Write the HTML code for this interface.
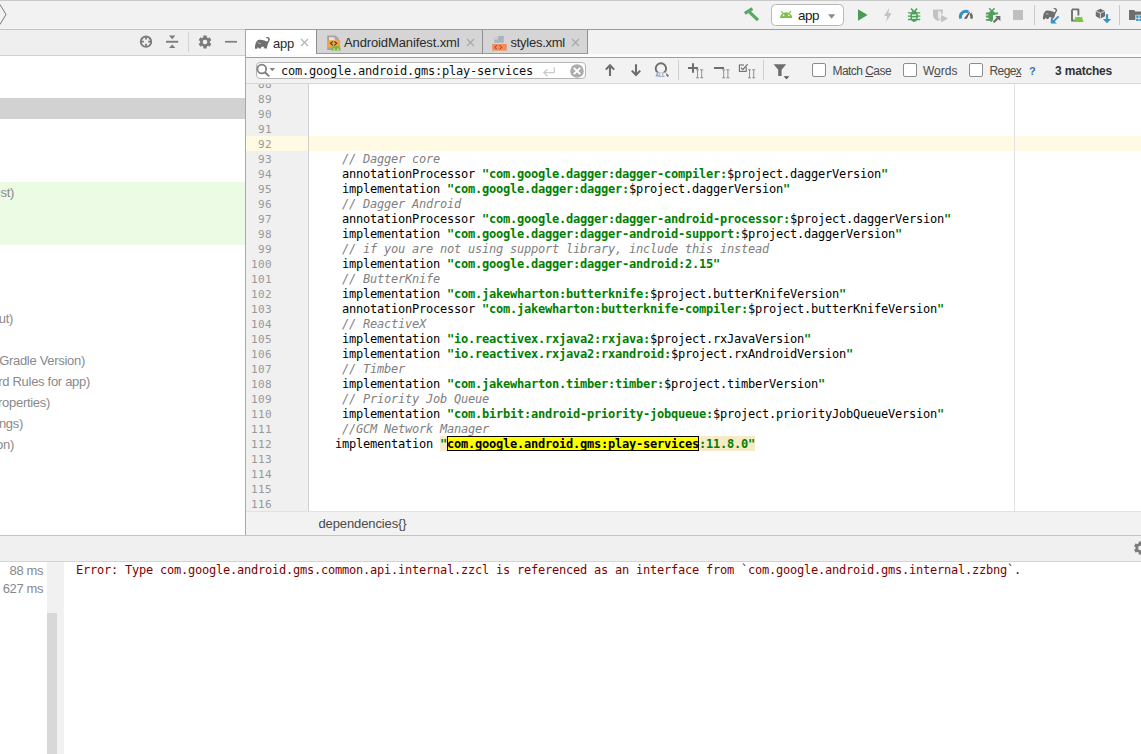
<!DOCTYPE html>
<html><head><meta charset="utf-8"><title>Android Studio</title>
<style>
*{box-sizing:border-box;margin:0;padding:0}
html,body{width:1141px;height:754px;overflow:hidden;background:#f2f2f2;font-family:"Liberation Sans","DejaVu Sans",sans-serif;font-size:13px;color:#222}
.abs{position:absolute}
#root{position:relative;width:1141px;height:754px;overflow:hidden;background:#f2f2f2}
/* top toolbar */
#topline{left:0;top:29px;width:1141px;height:1px;background:#c4c4c4}
#topline2{left:245px;top:29px;width:896px;height:1px;background:#9c9c9c}
/* left panel */
#lhead{left:0;top:30px;width:245px;height:25px;background:#efefef}
#lheadb{left:0;top:55px;width:245px;height:1px;background:#d0d0d0}
#ltree{left:0;top:56px;width:245px;height:479px;background:#fff}
#lsel{left:0;top:98px;width:245px;height:21px;background:#d2d2d2}
#lgreen{left:0;top:182px;width:245px;height:63px;background:#ecfbe3}
.tl{position:absolute;left:-200px;text-align:right;color:#8a8a8a;font-size:13px;line-height:21px;height:21px;white-space:nowrap;letter-spacing:-0.3px}
/* editor */
#eborder{left:245px;top:30px;width:1px;height:505px;background:#a8a8a8}
#tabapp{left:246px;top:30px;width:70px;height:27px;background:#fff}
.tabi{position:absolute;top:30px;height:24px;background:#d5d5d5;border-right:1px solid #8f8f8f;border-bottom:1px solid #9a9a9a}#tabstrip{left:246px;top:54px;width:895px;height:3px;background:#fcfcfc}
#tabline{left:246px;top:57px;width:895px;height:1px;background:#9e9e9e}
.tabt{position:absolute;top:31px;height:24px;line-height:24px;font-size:13px;color:#2b2b2b;white-space:nowrap}
#sbar{left:246px;top:58px;width:895px;height:25px;background:#f2f2f2}
#sbarb{left:246px;top:83px;width:895px;height:1px;background:#d6d6d6}
#sfield{left:256px;top:62px;width:330px;height:17px;background:#fff;border:1px solid #b5b5b5;border-radius:4px}
#stext{left:281px;top:63px;height:17px;line-height:17px;font-family:"DejaVu Sans Mono","Liberation Mono",monospace;font-size:12px;color:#111;white-space:nowrap;letter-spacing:-0.2246px}
.sopt{position:absolute;top:63px;height:16px;line-height:16px;font-size:12px;color:#4a4a4a;white-space:nowrap}
.cb{position:absolute;top:63px;width:14px;height:14px;background:#fff;border:1px solid #8c8c8c;border-radius:2px}
/* code */
#gutter{left:246px;top:84px;width:62px;height:427px;background:#f0f0f0}
#gutterb{left:308px;top:84px;width:1px;height:427px;background:#d0d0d0}
#code{left:309px;top:84px;width:832px;height:427px;background:#fff}
#cur1{left:246px;top:136px;width:62px;height:15px;background:#fffae3}
#cur2{left:309px;top:136px;width:832px;height:15px;background:#fffae3}
#margin{left:1014px;top:84px;width:1px;height:427px;background:#e2e2e2}
#clip{left:246px;top:84px;width:895px;height:427px;overflow:hidden}
.ln,.cl{position:absolute;height:15px;line-height:15px;font-family:"DejaVu Sans Mono","Liberation Mono",monospace;font-size:12px;white-space:pre;letter-spacing:-0.2246px}
.ln{left:0;width:272px;text-align:right;color:#999;font-size:11px;letter-spacing:0.38px}
.c{color:#808080;font-style:italic}
.p{color:#000}
.s{color:#008000;font-weight:bold}
.hl{background:#ffff00;color:#000;outline:1px solid #000;outline-offset:-1px}
.hl2{background:#fff5b3}
#crumb{left:246px;top:511px;width:895px;height:24px;background:#f2f2f2;border-top:1px solid #e2e2e2}
#crumbt{left:318.5px;top:512px;height:23px;line-height:24px;font-size:13px;color:#4a4a4a;letter-spacing:-0.12px}
/* bottom */
#bline{left:0;top:535px;width:1141px;height:1px;background:#c4c4c4}
#bhead{left:0;top:536px;width:1141px;height:25px;background:#f0f0f0}
#bheadb{left:0;top:561px;width:1141px;height:1px;background:#d4d4d4}
#bleft{left:0;top:562px;width:47px;height:192px;background:#fff}#btrack{left:47px;top:562px;width:17px;height:192px;background:#f1f1f1}
#bscroll{left:47px;top:613px;width:10px;height:141px;background:#d8d8d8}
#bcons{left:64px;top:562px;width:1077px;height:192px;background:#fff}
.ms{position:absolute;width:43px;text-align:right;left:0;font-size:13px;letter-spacing:-0.4px;color:#888;height:18px;line-height:18px}
#err{left:76px;top:563px;height:15px;line-height:15px;font-family:"DejaVu Sans Mono","Liberation Mono",monospace;font-size:12px;color:#7f0000;white-space:pre;letter-spacing:-0.2246px}
svg{position:absolute;overflow:visible}
</style></head><body><div id="root">
<!-- top toolbar -->
<div class="abs" id="topline"></div><div class="abs" id="topline2"></div>
<!-- left panel -->
<div class="abs" id="lhead"></div><div class="abs" id="lheadb"></div>
<div class="abs" id="ltree"></div><div class="abs" id="lsel"></div><div class="abs" id="lgreen"></div>
<div class="tl" style="top:182px;width:214px">st)</div>
<div class="tl" style="top:308px;width:213px">ut)</div>
<div class="tl" style="top:350px;width:285px">Gradle Version)</div>
<div class="tl" style="top:371px;width:290px">rd Rules for app)</div>
<div class="tl" style="top:392px;width:250px">roperties)</div>
<div class="tl" style="top:413px;width:223px">ngs)</div>
<div class="tl" style="top:434px;width:214px">on)</div>
<!-- editor -->
<div class="abs" id="eborder"></div>
<div class="abs" id="tabapp"></div>
<div class="abs" id="tabstrip"></div><div class="tabi" style="left:316px;width:167px;border-left:1px solid #8f8f8f"></div>
<div class="tabi" style="left:483px;width:105px"></div>
<div class="abs" id="tabline"></div>
<div class="tabt" style="left:273px;top:32px;letter-spacing:-0.25px">app</div>
<div class="tabt" style="left:344px;letter-spacing:-0.12px">AndroidManifest.xml</div>
<div class="tabt" style="left:510.5px;letter-spacing:-0.26px">styles.xml</div>
<div class="abs" id="sbar"></div><div class="abs" id="sbarb"></div>
<div class="abs" id="sfield"></div>
<div class="abs" id="stext">com.google.android.gms:play-services</div>
<div class="cb" style="left:812px"></div><div class="sopt" style="left:832.5px;letter-spacing:-0.55px">Match <u>C</u>ase</div>
<div class="cb" style="left:903px"></div><div class="sopt" style="left:923px">W<u>o</u>rds</div>
<div class="cb" style="left:969px"></div><div class="sopt" style="left:989.5px;letter-spacing:-0.6px">Rege<u>x</u></div>
<div class="sopt" style="left:1029px;color:#3a6fc4;font-weight:bold;font-size:11px">?</div>
<div class="sopt" style="left:1055px;font-weight:bold;color:#333;letter-spacing:-0.18px">3 matches</div>
<div class="abs" id="gutter"></div><div class="abs" id="gutterb"></div><div class="abs" id="code"></div>
<div class="abs" id="cur1"></div><div class="abs" id="cur2"></div><div class="abs" id="margin"></div>
<div class="abs" id="clip"><div style="position:absolute;left:-246px;top:-84px;width:1141px;height:754px">
<div class="ln" style="top:77px">88</div>
<div class="ln" style="top:92px">89</div>
<div class="ln" style="top:107px">90</div>
<div class="ln" style="top:122px">91</div>
<div class="ln" style="top:137px">92</div>
<div class="ln" style="top:152px">93</div>
<div class="ln" style="top:167px">94</div>
<div class="ln" style="top:182px">95</div>
<div class="ln" style="top:197px">96</div>
<div class="ln" style="top:212px">97</div>
<div class="ln" style="top:227px">98</div>
<div class="ln" style="top:242px">99</div>
<div class="ln" style="top:257px">100</div>
<div class="ln" style="top:272px">101</div>
<div class="ln" style="top:287px">102</div>
<div class="ln" style="top:302px">103</div>
<div class="ln" style="top:317px">104</div>
<div class="ln" style="top:332px">105</div>
<div class="ln" style="top:347px">106</div>
<div class="ln" style="top:362px">107</div>
<div class="ln" style="top:377px">108</div>
<div class="ln" style="top:392px">109</div>
<div class="ln" style="top:407px">110</div>
<div class="ln" style="top:422px">111</div>
<div class="ln" style="top:437px">112</div>
<div class="ln" style="top:452px">113</div>
<div class="ln" style="top:467px">114</div>
<div class="ln" style="top:482px">115</div>
<div class="ln" style="top:497px">116</div>
<div class="cl" style="top:152px;left:342px"><span class="c">// Dagger core</span></div>
<div class="cl" style="top:167px;left:342px"><span class="p">annotationProcessor </span><span class="s">"com.google.dagger:dagger-compiler:</span><span class="p">$project.daggerVersion</span><span class="s">"</span></div>
<div class="cl" style="top:182px;left:342px"><span class="p">implementation </span><span class="s">"com.google.dagger:dagger:</span><span class="p">$project.daggerVersion</span><span class="s">"</span></div>
<div class="cl" style="top:197px;left:342px"><span class="c">// Dagger Android</span></div>
<div class="cl" style="top:212px;left:342px"><span class="p">annotationProcessor </span><span class="s">"com.google.dagger:dagger-android-processor:</span><span class="p">$project.daggerVersion</span><span class="s">"</span></div>
<div class="cl" style="top:227px;left:342px"><span class="p">implementation </span><span class="s">"com.google.dagger:dagger-android-support:</span><span class="p">$project.daggerVersion</span><span class="s">"</span></div>
<div class="cl" style="top:242px;left:342px"><span class="c">// if you are not using support library, include this instead</span></div>
<div class="cl" style="top:257px;left:342px"><span class="p">implementation </span><span class="s">"com.google.dagger:dagger-android:2.15"</span></div>
<div class="cl" style="top:272px;left:342px"><span class="c">// ButterKnife</span></div>
<div class="cl" style="top:287px;left:342px"><span class="p">implementation </span><span class="s">"com.jakewharton:butterknife:</span><span class="p">$project.butterKnifeVersion</span><span class="s">"</span></div>
<div class="cl" style="top:302px;left:342px"><span class="p">annotationProcessor </span><span class="s">"com.jakewharton:butterknife-compiler:</span><span class="p">$project.butterKnifeVersion</span><span class="s">"</span></div>
<div class="cl" style="top:317px;left:342px"><span class="c">// ReactiveX</span></div>
<div class="cl" style="top:332px;left:342px"><span class="p">implementation </span><span class="s">"io.reactivex.rxjava2:rxjava:</span><span class="p">$project.rxJavaVersion</span><span class="s">"</span></div>
<div class="cl" style="top:347px;left:342px"><span class="p">implementation </span><span class="s">"io.reactivex.rxjava2:rxandroid:</span><span class="p">$project.rxAndroidVersion</span><span class="s">"</span></div>
<div class="cl" style="top:362px;left:342px"><span class="c">// Timber</span></div>
<div class="cl" style="top:377px;left:342px"><span class="p">implementation </span><span class="s">"com.jakewharton.timber:timber:</span><span class="p">$project.timberVersion</span><span class="s">"</span></div>
<div class="cl" style="top:392px;left:342px"><span class="c">// Priority Job Queue</span></div>
<div class="cl" style="top:407px;left:342px"><span class="p">implementation </span><span class="s">"com.birbit:android-priority-jobqueue:</span><span class="p">$project.priorityJobQueueVersion</span><span class="s">"</span></div>
<div class="cl" style="top:422px;left:342px"><span class="c">//GCM Network Manager</span></div>
<div class="abs" style="left:440px;top:436px;width:315px;height:15px;background:#f5ebc8"></div>
<div class="abs" style="left:447px;top:436px;width:252px;height:15px;background:#ffff00;border:1px solid #000"></div>
<div class="cl" style="top:437px;left:335px"><span class="p">implementation </span><span class="s">"</span><span class="s" style="color:#000">com.google.android.gms:play-services</span><span class="s">:11.8.0"</span></div></div></div>
<div class="abs" id="crumb"></div><div class="abs" id="crumbt">dependencies{}</div>
<!-- bottom -->
<div class="abs" id="bline"></div><div class="abs" id="bhead"></div><div class="abs" id="bheadb"></div>
<div class="abs" id="bleft"></div><div class="abs" id="btrack"></div><div class="abs" id="bscroll"></div><div class="abs" id="bcons"></div>
<div class="ms" style="top:562px">88 ms</div><div class="ms" style="top:580px">627 ms</div>
<div class="abs" id="err">Error: Type com.google.android.gms.common.api.internal.zzcl is referenced as an interface from `com.google.android.gms.internal.zzbng`.</div>
<svg style="left:0px;top:0px" width="1141" height="29" viewBox="0 0 1141 29"><rect x="0" y="0" width="1141" height="1" fill="#c9c9c9"/><polyline points="0,4.5 6,14.5 0,24.5" fill="none" stroke="#7a7a7a" stroke-width="1"/><line x1="749.4" y1="12" x2="758" y2="20.1" stroke="#59a869" stroke-width="3.1"/><line x1="744.8" y1="13.3" x2="752.4" y2="8.7" stroke="#59a869" stroke-width="3.3"/><rect x="771.5" y="4.5" width="72" height="21" rx="4" fill="#fff" stroke="#b7b7b7"/><path d="M780,18 A6.1,5.7 0 0 1 792.2,18 Z" fill="#7fc04c"/><path d="M783,13.4 L781.2,11.2 M789.2,13.4 L791,11.2" stroke="#7fc04c" stroke-width="1.2"/><circle cx="783.6" cy="15.4" r=".8" fill="#fff"/><circle cx="788.8" cy="15.4" r=".8" fill="#fff"/><text x="798" y="19.5" font-family="Liberation Sans, sans-serif" font-size="13.4" letter-spacing="-0.5" fill="#1a1a1a">app</text><polygon points="828,14.3 835.2,14.3 831.6,18.7" fill="#8c8c8c"/><polygon points="858,9.3 867.6,15 858,20.8" fill="#499c54"/><polygon points="889.2,8 884,16 887.2,16 886.2,21.8 891.6,13.2 888.4,13.2" fill="#c2c2c2"/><g transform="translate(914,15) scale(1.0)" stroke="#4ea05a" fill="#4ea05a"><ellipse cx="0.1" cy="1.2" rx="3.8" ry="5.7" stroke="none"/><path d="M-6,-2.1 H6.2 M-6.2,1.1 H6.4 M-6,4.5 H6.2" stroke-width="1.4" fill="none"/><path d="M-2.9,-6.6 L-0.6,-3.8 M3.1,-6.6 L0.8,-3.8" stroke-width="1.5" fill="none"/><path d="M-2,0.1 H2.2 M-2,3.1 H2.2" stroke="#fff" stroke-width="1.1" fill="none"/></g><path d="M933,9.6 H942.8 V15 C942.8,18 940.6,20 937.9,21 C935.2,20 933,18 933,15 Z" fill="#c2c2c2"/><path d="M938,11.2 H941 V15 C941,16.8 939.8,18.2 938,19 Z" fill="#e8e8e8"/><polygon points="939.8,12.8 950,18.6 939.8,24.4" fill="#f2f2f2"/><polygon points="940.9,14.7 947.9,18.6 940.9,22.6" fill="#c2c2c2"/><path d="M960.67,18.60 A5.5,5.5 0 0 1 968.48,12.04" fill="none" stroke="#3592c4" stroke-width="3"/><path d="M970.39,13.39 A5.7,5.7 0 0 1 971.32,18.66" fill="none" stroke="#6e6e6e" stroke-width="2.6"/><path d="M963.9,18.8 L969.2,11.8 L970,12.3 L966.8,18.8 Z" fill="#5a5a5a"/><g stroke="#4ea05a" fill="#4ea05a"><ellipse cx="991.8" cy="16.2" rx="3.5" ry="5.8" stroke="none"/><path d="M985.9,13.5 H998 M985.9,16.5 H994 M985.9,19.9 H994" stroke-width="1.8" fill="none"/><path d="M989.2,8.2 L991.8,11 L994.6,8.2" stroke-width="1.5" fill="none"/></g><path d="M993,15 H1001.4 V23.4 H990.4 L993,20 Z" fill="#f2f2f2"/><path d="M993.6,22.3 L999,16.9" stroke="#6e6e6e" stroke-width="2.2"/><polygon points="995.2,16 1000.4,16 1000.4,21.2" fill="#6e6e6e"/><rect x="1013" y="10" width="10" height="10" fill="#bfbfbf"/><rect x="1034" y="5" width="1" height="20" fill="#c9c9c9"/><g transform="translate(1042.7,7.9) scale(0.95)"><path d="M11.4,0.45 C12.2,0.1 13.2,0.1 13.8,0.35 C14.8,0.8 15.3,1.7 15.2,2.6 C15.1,3.6 14.6,4.3 14,5 C13.3,6.2 12.8,7.6 12.6,9 L12.1,11.7 L9.7,11.7 C9.5,10.4 8.8,9.5 7.9,9.5 C7,9.5 6.3,10.4 6.1,11.7 L4.2,11.7 L3.3,10.1 L2.4,11.9 L0.3,11.9 C0.1,10 0.3,8.2 0.9,6.6 C1.4,5.2 2.2,3.9 3.3,3.1 C5,2.6 7,2.8 8.8,3.3 C9.9,3.6 11,4.1 11.9,4.5 C12.8,4.3 13.4,3.9 13.5,3.3 C13.7,2.5 13.5,1.8 13,1.4 C12.6,1.2 12.1,1.2 11.6,1.3 Z" fill="#6e6e6e"/><path d="M3.2,5.7 C4.1,6.4 5.2,6.7 6.1,6.6" stroke="#fff" stroke-opacity=".7" stroke-width=".8" fill="none"/></g><path d="M1058.6,16.4 L1052.4,22.4" stroke="#f2f2f2" stroke-width="4.5"/><path d="M1058.6,16.4 L1052.4,22.4" stroke="#3592c4" stroke-width="2"/><polygon points="1050.8,17.6 1050.8,23.6 1056.8,23.6" fill="#3592c4"/><path d="M1072,9.4 H1078.4 V15.4 M1072,9.4 V20.6 H1074" fill="none" stroke="#6e6e6e" stroke-width="1.9" stroke-linejoin="round"/><path d="M1073.8,22 A4.8,5.2 0 0 1 1083.4,22 Z" fill="#7fc04c"/><path d="M1075.2,16.8 L1076,18 M1082,16.8 L1081.2,18" stroke="#7fc04c" stroke-width="1"/><polygon points="1100.4,8.8 1105,11 1105,16.2 1100.4,18.7 1095.8,16.2 1095.8,11" fill="#6e6e6e"/><path d="M1095.8,11 L1100.4,13.2 L1105,11 M1100.4,13.2 V18.7" stroke="#f2f2f2" stroke-width=".8" fill="none"/><path d="M1107,14.2 V20" stroke="#3592c4" stroke-width="2.2"/><polygon points="1102.8,19 1111.2,19 1107,23.3" fill="#3592c4"/><rect x="1119" y="5" width="1" height="20" fill="#c9c9c9"/><path d="M1129,10 H1134 L1135.4,11.6 H1141 V20 H1129 Z" fill="#6e6e6e"/><rect x="1135.4" y="14.8" width="6" height="7" fill="#f2f2f2"/><rect x="1136.2" y="15.4" width="2.4" height="2.4" fill="#3592c4"/><rect x="1139.4" y="15.4" width="2.4" height="2.4" fill="#3592c4"/><rect x="1136.2" y="18.6" width="2.4" height="2.4" fill="#3592c4"/><rect x="1139.4" y="18.6" width="2.4" height="2.4" fill="#3592c4"/></svg>
<svg style="left:0px;top:29px" width="1141" height="55" viewBox="0 29 1141 55"><circle cx="146" cy="41.7" r="5.2" fill="none" stroke="#7c7c7c" stroke-width="1.9"/><path d="M146,36.4 V39.6 M146,43.8 V47 M140.7,41.7 H143.9 M148.1,41.7 H151.3" stroke="#7c7c7c" stroke-width="1.8"/><rect x="166" y="40.8" width="12.2" height="1.9" fill="#7c7c7c"/><polygon points="169,35.6 175.4,35.6 172.2,39.3" fill="#7c7c7c"/><polygon points="169,48.1 175.4,48.1 172.2,44.4" fill="#7c7c7c"/><rect x="188" y="32" width="1" height="20" fill="#d4d4d4"/><polygon points="203.38,37.69 203.30,35.62 206.70,35.62 206.62,37.69 207.92,38.44 209.68,37.34 211.37,40.28 209.54,41.25 209.54,42.75 211.37,43.72 209.68,46.66 207.92,45.56 206.62,46.31 206.70,48.38 203.30,48.38 203.38,46.31 202.08,45.56 200.32,46.66 198.63,43.72 200.46,42.75 200.46,41.25 198.63,40.28 200.32,37.34 202.08,38.44" fill="#7c7c7c"/><circle cx="205" cy="42" r="4.9" fill="#7c7c7c"/><circle cx="205" cy="42" r="2.3" fill="#efefef"/><rect x="225" y="40.9" width="12" height="1.7" fill="#7c7c7c"/><g transform="translate(254.7,36.9)"><path d="M11.4,0.45 C12.2,0.1 13.2,0.1 13.8,0.35 C14.8,0.8 15.3,1.7 15.2,2.6 C15.1,3.6 14.6,4.3 14,5 C13.3,6.2 12.8,7.6 12.6,9 L12.1,11.7 L9.7,11.7 C9.5,10.4 8.8,9.5 7.9,9.5 C7,9.5 6.3,10.4 6.1,11.7 L4.2,11.7 L3.3,10.1 L2.4,11.9 L0.3,11.9 C0.1,10 0.3,8.2 0.9,6.6 C1.4,5.2 2.2,3.9 3.3,3.1 C5,2.6 7,2.8 8.8,3.3 C9.9,3.6 11,4.1 11.9,4.5 C12.8,4.3 13.4,3.9 13.5,3.3 C13.7,2.5 13.5,1.8 13,1.4 C12.6,1.2 12.1,1.2 11.6,1.3 Z" fill="#6e6e6e"/><path d="M3.2,5.7 C4.1,6.4 5.2,6.7 6.1,6.6" stroke="#fff" stroke-opacity=".7" stroke-width=".8" fill="none"/></g><path d="M301,39 L308,46 M301,46 L308,39" stroke="#b4b4b4" stroke-width="1.2" fill="none"/><path d="M467,39 L474,46 M467,46 L474,39" stroke="#a8a8a8" stroke-width="1.2" fill="none"/><path d="M572,39 L579,46 M572,46 L579,39" stroke="#a8a8a8" stroke-width="1.2" fill="none"/><path d="M327.2,35.4 H335.6 L338.8,38.6 V50 H327.2 Z" fill="#a4a4a4"/><path d="M329,37.2 H334.6 V39.8 H337 V41 H329 Z" fill="#e6e6e6"/><rect x="327" y="40.2" width="13.2" height="7.4" fill="#f2a444"/><path d="M332.9,41.3 L330.5,43.3 L332.9,45.3 M334.3,41.3 L336.7,43.3 L334.3,45.3" stroke="#4a3420" stroke-width="1.1" fill="none"/><path d="M331.2,50.6 A4.8,4.6 0 0 1 340.8,50.6 Z" fill="#79b83c"/><path d="M332.6,46 L333.6,47.4 M339.4,46 L338.4,47.4" stroke="#79b83c" stroke-width="1"/><circle cx="334" cy="49.2" r=".7" fill="#fff"/><circle cx="338" cy="49.2" r=".7" fill="#fff"/><path d="M494.2,36 H503.8 V42.8 H494.2 Z" fill="#a9b4bf"/><path d="M494.2,36 H498 L494.2,39.8 Z" fill="#d6d6d6"/><path d="M498,36 V39.8 H494.2" fill="#c9d0d6"/><rect x="492.2" y="44" width="14.6" height="6.6" fill="#f08d5b"/><path d="M496.8,45.2 L494.8,47.3 L496.8,49.4 M499.6,45.2 L501.6,47.3 L499.6,49.4" stroke="#9a3412" stroke-width="1" fill="none"/><circle cx="261.8" cy="69" r="4.4" fill="none" stroke="#808080" stroke-width="1.7"/><path d="M264.8,72.2 L269.2,76.4" stroke="#808080" stroke-width="2"/><polygon points="269.6,68 275,68 272.3,71.2" fill="#808080"/><path d="M554.3,67.2 V72.6 H544 M547.6,69.2 L543.8,72.6 L547.6,76.2" fill="none" stroke="#cbcbcb" stroke-width="1.3"/><circle cx="577" cy="71" r="6.8" fill="#adadad"/><path d="M573.8,67.8 L580.2,74.2 M573.8,74.2 L580.2,67.8" stroke="#fff" stroke-width="1.9"/><path d="M610,76 V65.4 M605.8,69.6 L610,65.2 L614.2,69.6" fill="none" stroke="#6e6e6e" stroke-width="2.1"/><path d="M636,64.2 V74.8 M631.8,70.6 L636,75 L640.2,70.6" fill="none" stroke="#6e6e6e" stroke-width="2.1"/><circle cx="660.9" cy="68.5" r="5.2" fill="none" stroke="#6e6e6e" stroke-width="1.9"/><path d="M664.4,72.4 L668.4,76.4" stroke="#6e6e6e" stroke-width="1.8"/><rect x="655.6" y="72.6" width="10.6" height="4" fill="#f2f2f2"/><text x="655.6" y="76.6" font-family="Liberation Sans, sans-serif" font-size="4.6" font-weight="bold" fill="#6d87b5" letter-spacing="0.2">ALL</text><rect x="678" y="60" width="1" height="20" fill="#cfcfcf"/><path d="M688,68 H698 M693,63.2 V72.8" stroke="#6e6e6e" stroke-width="2"/><path d="M696,69.8 H699 M696,77.8 H699 M697.5,69.8 V77.8" stroke="#7a7a7a" stroke-width=".8" fill="none"/><path d="M700.2,69.8 H703.2 M700.2,77.8 H703.2 M701.7,69.8 V77.8" stroke="#7a7a7a" stroke-width=".8" fill="none"/><path d="M714,68 H724" stroke="#6e6e6e" stroke-width="2"/><path d="M722.2,69.8 H725.2 M722.2,77.8 H725.2 M723.7,69.8 V77.8" stroke="#7a7a7a" stroke-width=".8" fill="none"/><path d="M726.4000000000001,69.8 H729.4000000000001 M726.4000000000001,77.8 H729.4000000000001 M727.9000000000001,69.8 V77.8" stroke="#7a7a7a" stroke-width=".8" fill="none"/><rect x="739.4" y="65" width="6.8" height="6.4" fill="none" stroke="#6e6e6e" stroke-width="1.1"/><rect x="744" y="63.6" width="4" height="3.2" fill="#f2f2f2"/><path d="M741,67.6 L742.8,69.6 L747.6,64.2" fill="none" stroke="#6e6e6e" stroke-width="1.2"/><path d="M748,69.8 H751 M748,77.8 H751 M749.5,69.8 V77.8" stroke="#7a7a7a" stroke-width=".8" fill="none"/><path d="M752.2,69.8 H755.2 M752.2,77.8 H755.2 M753.7,69.8 V77.8" stroke="#7a7a7a" stroke-width=".8" fill="none"/><rect x="763" y="60" width="1" height="20" fill="#cfcfcf"/><path d="M773.6,64.2 H786.2 L781.6,69.8 V76 H778.2 V69.8 Z" fill="#6e6e6e"/><polygon points="783.6,76.2 789.4,76.2 786.5,79.2" fill="#555"/></svg>
<svg style="left:1120px;top:536px" width="21" height="25" viewBox="1120 536 21 25"><polygon points="1138.78,543.69 1138.70,541.62 1142.10,541.62 1142.02,543.69 1143.32,544.44 1145.08,543.34 1146.77,546.28 1144.94,547.25 1144.94,548.75 1146.77,549.72 1145.08,552.66 1143.32,551.56 1142.02,552.31 1142.10,554.38 1138.70,554.38 1138.78,552.31 1137.48,551.56 1135.72,552.66 1134.03,549.72 1135.86,548.75 1135.86,547.25 1134.03,546.28 1135.72,543.34 1137.48,544.44" fill="#7c7c7c"/><circle cx="1140.4" cy="548" r="4.9" fill="#7c7c7c"/><circle cx="1140.4" cy="548" r="2.3" fill="#f0f0f0"/></svg>
</div></body></html>
